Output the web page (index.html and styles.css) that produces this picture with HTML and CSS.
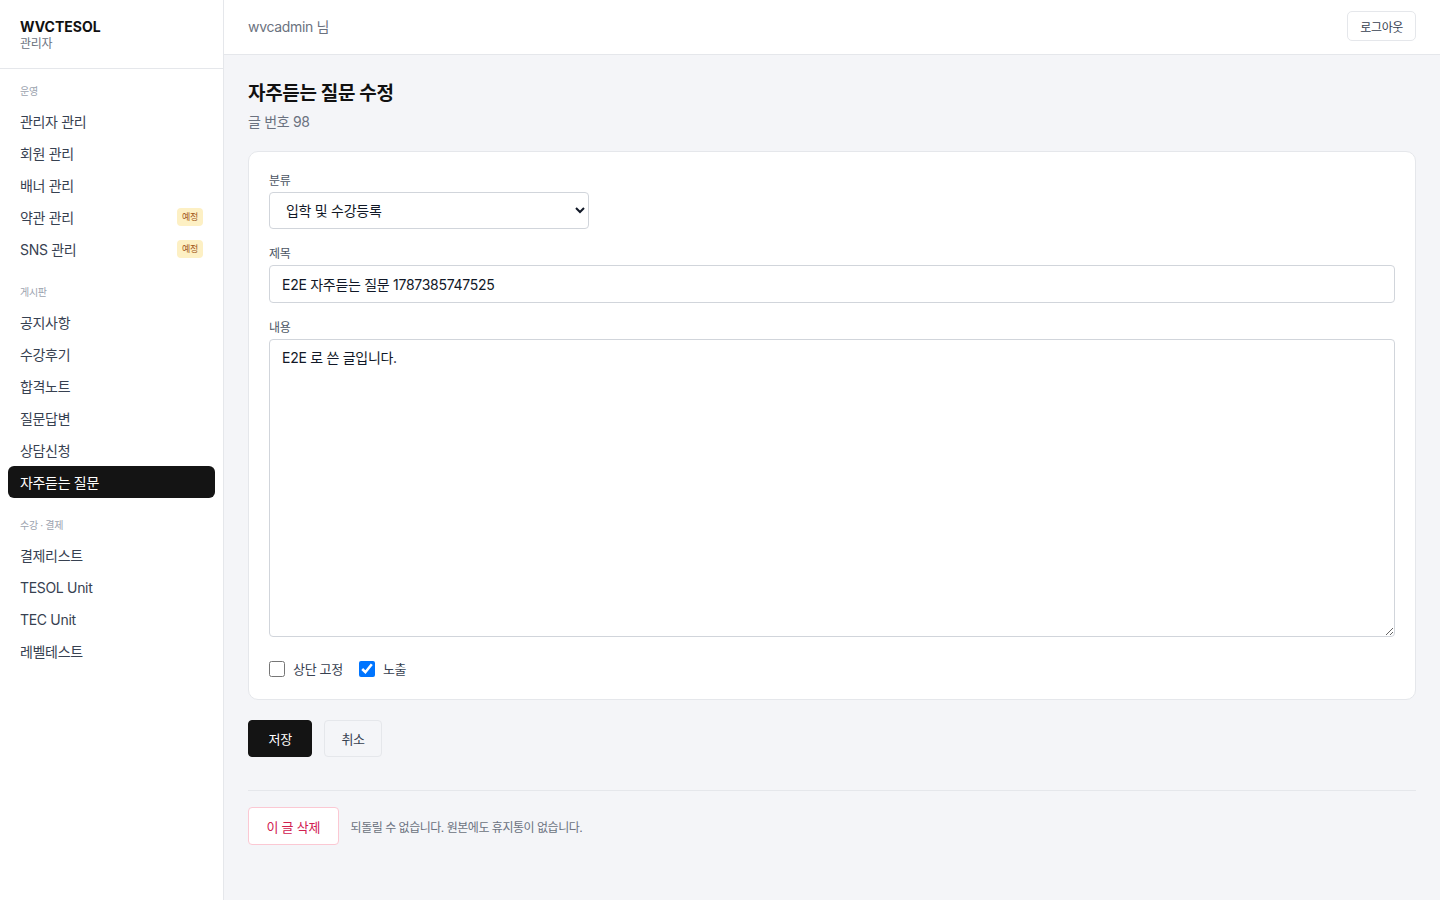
FILE: index.html
```html
<!DOCTYPE html>
<html lang="ko">

<head>
    <meta charset="UTF-8">
    <meta name="viewport" content="width=device-width, initial-scale=1.0">
    <title>자주듣는 질문 수정 - WVCTESOL 관리자</title>
    <link rel="stylesheet" href="styles.css">
</head>

<body>
    <div class="layout">
        <aside class="sidebar">
            <div class="brand">
                <div class="brand-name">WVCTESOL</div>
                <div class="brand-sub">관리자</div>
            </div>
            <nav class="nav">
                <div class="nav-group">
                    <div class="nav-label">운영</div>
                    <a class="nav-item" href="#">관리자 관리</a>
                    <a class="nav-item" href="#">회원 관리</a>
                    <a class="nav-item" href="#">배너 관리</a>
                    <a class="nav-item" href="#">약관 관리 <span class="badge">예정</span></a>
                    <a class="nav-item" href="#">SNS 관리 <span class="badge">예정</span></a>
                </div>
                <div class="nav-group">
                    <div class="nav-label">게시판</div>
                    <a class="nav-item" href="#">공지사항</a>
                    <a class="nav-item" href="#">수강후기</a>
                    <a class="nav-item" href="#">합격노트</a>
                    <a class="nav-item" href="#">질문답변</a>
                    <a class="nav-item" href="#">상담신청</a>
                    <a class="nav-item active" href="#">자주듣는 질문</a>
                </div>
                <div class="nav-group">
                    <div class="nav-label">수강 · 결제</div>
                    <a class="nav-item" href="#">결제리스트</a>
                    <a class="nav-item" href="#">TESOL Unit</a>
                    <a class="nav-item" href="#">TEC Unit</a>
                    <a class="nav-item" href="#">레벨테스트</a>
                </div>
            </nav>
        </aside>

        <div class="main">
            <header class="topbar">
                <span class="user">wvcadmin 님</span>
                <button class="btn-logout">로그아웃</button>
            </header>

            <main class="content">
                <div class="page-head">
                    <h1 class="page-title">자주듣는 질문 수정</h1>
                    <div class="page-sub">글 번호 98</div>
                </div>

                <form class="card" onsubmit="return false;">
                    <div class="field">
                        <label class="field-label" for="category">분류</label>
                        <select id="category" class="select">
                            <option selected>입학 및 수강등록</option>
                            <option>수업 및 과정</option>
                            <option>결제 및 환불</option>
                            <option>기타</option>
                        </select>
                    </div>
                    <div class="field">
                        <label class="field-label" for="title">제목</label>
                        <input id="title" class="input" type="text" value="E2E 자주듣는 질문 1787385747525">
                    </div>
                    <div class="field">
                        <label class="field-label" for="body">내용</label>
                        <textarea id="body" class="textarea">E2E 로 쓴 글입니다.</textarea>
                    </div>
                    <div class="checks">
                        <label class="check"><input type="checkbox"> 상단 고정</label>
                        <label class="check"><input type="checkbox" checked> 노출</label>
                    </div>
                </form>

                <div class="actions">
                    <button class="btn btn-primary">저장</button>
                    <button class="btn btn-ghost">취소</button>
                </div>

                <div class="danger-zone">
                    <button class="btn btn-danger">이 글 삭제</button>
                    <span class="danger-note">되돌릴 수 없습니다. 원본에도 휴지통이 없습니다.</span>
                </div>
            </main>
        </div>
    </div>
</body>

</html>
```

FILE: styles.css
```css
* {
    box-sizing: border-box;
}

body {
    margin: 0;
    font-family: Inter, "Noto Sans CJK KR", sans-serif;
    letter-spacing: -0.02em;
    color: #111827;
    background-color: #f4f5f8;
}

.layout {
    display: flex;
    min-height: 100vh;
}

/* sidebar */
.sidebar {
    width: 224px;
    flex-shrink: 0;
    background-color: #fff;
    border-right: 1px solid #e5e7eb;
}

.brand {
    padding: 18px 20px 16px;
    border-bottom: 1px solid #e5e7eb;
}

.brand-name {
    font-size: 14px;
    font-weight: 700;
    line-height: 18px;
    letter-spacing: 0;
    color: #111;
}

.brand-sub {
    font-size: 12px;
    line-height: 16px;
    color: #6b7280;
}

.nav {
    padding: 14px 8px;
}

.nav-group + .nav-group {
    margin-top: 19px;
}

.nav-label {
    padding: 0 12px;
    font-size: 10px;
    line-height: 16px;
    color: #9ca3af;
    margin-bottom: 6px;
}

.nav-item {
    display: flex;
    align-items: center;
    justify-content: space-between;
    height: 32px;
    padding: 0 12px;
    font-size: 14px;
    color: #374151;
    text-decoration: none;
    border-radius: 6px;
}

.nav-item.active {
    background-color: #141414;
    color: #fff;
}

.badge {
    font-size: 9px;
    line-height: 18px;
    padding: 0 5px;
    border-radius: 4px;
    background-color: #fdf0c4;
    color: #a2581a;
}

/* main */
.main {
    flex: 1;
    min-width: 0;
}

.topbar {
    height: 55px;
    display: flex;
    align-items: center;
    justify-content: space-between;
    padding: 0 24px 2px;
    background-color: #fff;
    border-bottom: 1px solid #e5e7eb;
}

.user {
    font-size: 14px;
    color: #6b7280;
}

.btn-logout {
    height: 30px;
    padding: 0 12px;
    font-family: inherit;
    font-size: 12px;
    letter-spacing: -0.03em;
    color: #374151;
    background-color: #fff;
    border: 1px solid #e5e7eb;
    border-radius: 5px;
    cursor: pointer;
}

.content {
    padding: 26px 24px 24px;
}

.page-head {
    margin-bottom: 19px;
}

.page-title {
    margin: 0;
    font-size: 19px;
    line-height: 26px;
    font-weight: 700;
    color: #111;
}

.page-sub {
    margin-top: 5px;
    font-size: 14px;
    line-height: 20px;
    color: #6b7280;
}

.card {
    background-color: #fff;
    border: 1px solid #e5e7eb;
    border-radius: 10px;
    padding: 21px 20px 20px;
}

.field + .field {
    margin-top: 17px;
}

.field-label {
    display: block;
    font-size: 12px;
    line-height: 16px;
    color: #4b5563;
    margin-bottom: 3px;
}

.select,
.input,
.textarea {
    font-family: inherit;
    font-size: 14px;
    letter-spacing: -0.02em;
    color: #111827;
    background-color: #fff;
    border: 1px solid #d1d5db;
    border-radius: 4px;
}

.select {
    width: 320px;
    height: 37px;
    padding: 0 10px 0 12px;
}

.input {
    display: block;
    width: 100%;
    height: 38px;
    padding: 0 12px 1px;
}

.textarea {
    display: block;
    width: 100%;
    height: 298px;
    padding: 8px 12px;
    line-height: 20px;
    resize: vertical;
}

.checks {
    display: flex;
    gap: 16px;
    margin-top: 22px;
}

.check {
    display: flex;
    align-items: center;
    gap: 8px;
    font-size: 13px;
    line-height: 20px;
    color: #374151;
}

.check input {
    width: 16px;
    height: 16px;
    margin: 0;
}

.actions {
    display: flex;
    gap: 12px;
    margin-top: 20px;
}

.btn {
    height: 37px;
    padding: 0 16px;
    font-family: inherit;
    font-size: 13px;
    letter-spacing: -0.02em;
    border-radius: 4px;
    cursor: pointer;
}

.btn-primary {
    background-color: #141414;
    color: #fff;
    border: 1px solid #141414;
    padding: 0 19.5px;
}

.btn-ghost {
    background-color: transparent;
    color: #374151;
    border: 1px solid #e5e7eb;
}

.danger-zone {
    display: flex;
    align-items: center;
    gap: 12px;
    margin-top: 33px;
    padding-top: 16px;
    border-top: 1px solid #e5e7eb;
}

.btn-danger {
    height: 38px;
    padding: 0 17.5px;
    background-color: #fff;
    color: #d1204f;
    border: 1px solid #fbc8d3;
}

.danger-note {
    font-size: 12px;
    letter-spacing: -0.04em;
    color: #6b7280;
}
```
